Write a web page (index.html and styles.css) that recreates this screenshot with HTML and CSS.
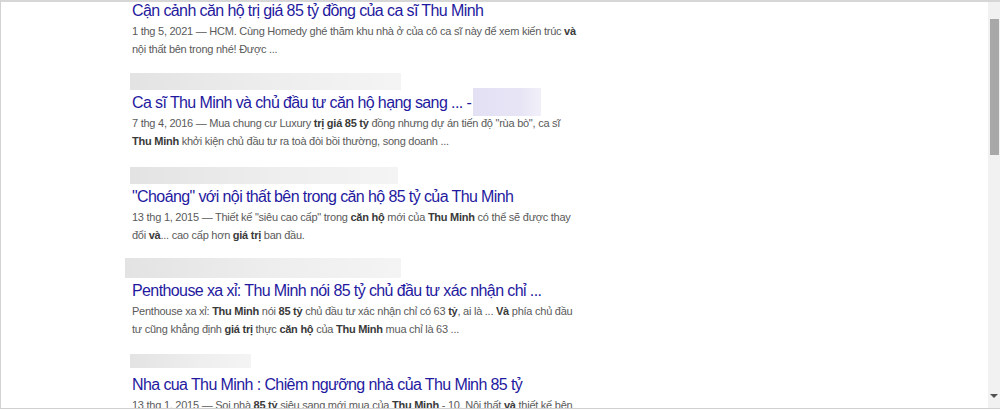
FILE: index.html
```html
<!DOCTYPE html>
<html lang="vi">
<head>
  <meta charset="UTF-8" />
  <meta name="viewport" content="width=device-width, initial-scale=1.0"/>
  <title>Thu Minh 85 tỷ - Tìm kiếm</title>
  <link rel="stylesheet" href="styles.css">
</head>
<body>
  <div class="frame">
    <div class="results">

      <div class="result first">
        <a class="title" href="#">Cận cảnh căn hộ trị giá 85 tỷ đồng của ca sĩ Thu Minh</a>
        <div class="snippet">1 thg 5, 2021 — HCM. Cùng Homedy ghé thăm khu nhà ở của cô ca sĩ này để xem kiến trúc <b>và</b> nội thất bên trong nhé! Được ...</div>
      </div>

      <div class="result">
        <div class="crumb"><div class="bar b2"></div></div>
        <a class="title" href="#">Ca sĩ Thu Minh và chủ đầu tư căn hộ hạng sang ... - <span class="site-blur"></span></a>
        <div class="snippet">7 thg 4, 2016 — Mua chung cư Luxury <b>trị giá 85 tỷ</b> đồng nhưng dự án tiến độ "rùa bò", ca sĩ <b>Thu Minh</b> khởi kiện chủ đầu tư ra toà đòi bồi thường, song doanh ...</div>
      </div>

      <div class="result">
        <div class="crumb"><div class="bar b3"></div></div>
        <a class="title" href="#">"Choáng" với nội thất bên trong căn hộ 85 tỷ của Thu Minh</a>
        <div class="snippet">13 thg 1, 2015 — Thiết kế "siêu cao cấp" trong <b>căn hộ</b> mới của <b>Thu Minh</b> có thể sẽ được thay đổi <b>và</b>... cao cấp hơn <b>giá trị</b> ban đầu.</div>
      </div>

      <div class="result">
        <div class="crumb"><div class="bar b4"></div></div>
        <a class="title" href="#">Penthouse xa xỉ: Thu Minh nói 85 tỷ chủ đầu tư xác nhận chỉ ...</a>
        <div class="snippet">Penthouse xa xỉ: <b>Thu Minh</b> nói <b>85 tỷ</b> chủ đầu tư xác nhận chỉ có 63 <b>tỷ</b>, ai là ... <b>Và</b> phía chủ đầu tư cũng khẳng định <b>giá trị</b> thực <b>căn hộ</b> của <b>Thu Minh</b> mua chỉ là 63 ...</div>
      </div>

      <div class="result">
        <div class="crumb"><div class="bar b5"></div></div>
        <a class="title" href="#">Nha cua Thu Minh : Chiêm ngưỡng nhà của Thu Minh 85 tỷ</a>
        <div class="snippet">13 thg 1, 2015 — Soi nhà <b>85 tỷ</b> siêu sang mới mua của <b>Thu Minh</b> - 10. Nội thất <b>và</b> thiết kế bên trong căn hộ ...</div>
      </div>

    </div>
    <div class="scrollbar">
      <div class="thumb"></div>
      <div class="arrow"></div>
    </div>
  </div>
</body>
</html>
```

FILE: styles.css
```css
* {
  margin: 0;
  padding: 0;
  box-sizing: border-box;
}
body {
  background: #fff;
  font-family: 'Liberation Sans', Arial, sans-serif;
  overflow: hidden;
}
.frame {
  display: flex;
  height: 409px;
  border-top: 2px solid #d6d6d6;
  border-left: 1px solid #d2d2d2;
  border-bottom: 1px solid #d0d0d0;
  overflow: hidden;
}
.results {
  flex: 1;
  display: flex;
  flex-direction: column;
  padding-left: 131px;
  overflow: hidden;
}
.result {
  height: 94px;
  flex-shrink: 0;
}
.result.first {
  height: 62px;
  margin-top: -2px;
}

/* blurred breadcrumb above each title */
.crumb {
  height: 30px;
  display: flex;
  flex-direction: column;
}
.bar {
  margin-left: -2px;
  background: linear-gradient(to right, #e3e3e3 0%, #e8e8e8 25%, #eeeeee 55%, #f4f4f4 100%);
}
.b2 { width: 271px; height: 17px; margin-top: 11px; }
.b3 { width: 268px; height: 17px; margin-top: 11px; }
.b4 { width: 276px; height: 20px; margin-top: 8px; margin-left: -7px; }
.b5 { width: 121px; height: 14px; margin-top: 10px; }

.title {
  display: block;
  height: 22px;
  font-size: 16px;
  line-height: 22px;
  letter-spacing: -0.6px;
  color: #1f1aa0;
  text-decoration: none;
  white-space: nowrap;
}
.site-blur {
  display: inline-block;
  width: 68px;
  height: 28px;
  margin: -5px 0 -1px -2px;
  vertical-align: middle;
  background: linear-gradient(to right, #e2e0f3, #e7e5f5 70%, #f1f0f9);
}
.snippet {
  width: 450px;
  font-size: 11px;
  line-height: 18px;
  letter-spacing: -0.25px;
  color: #5a5a5a;
}
.snippet b {
  color: #3a3a3a;
}

.scrollbar {
  width: 12px;
  background: #f1f1f1;
  display: flex;
  flex-direction: column;
  align-items: center;
  padding-top: 17px;
}
.thumb {
  width: 9px;
  height: 136px;
  background: #a8a8a8;
}
.arrow {
  margin-top: auto;
  margin-bottom: 10px;
  width: 0;
  height: 0;
  border-left: 4px solid transparent;
  border-right: 4px solid transparent;
  border-top: 4px solid #505050;
}
```
